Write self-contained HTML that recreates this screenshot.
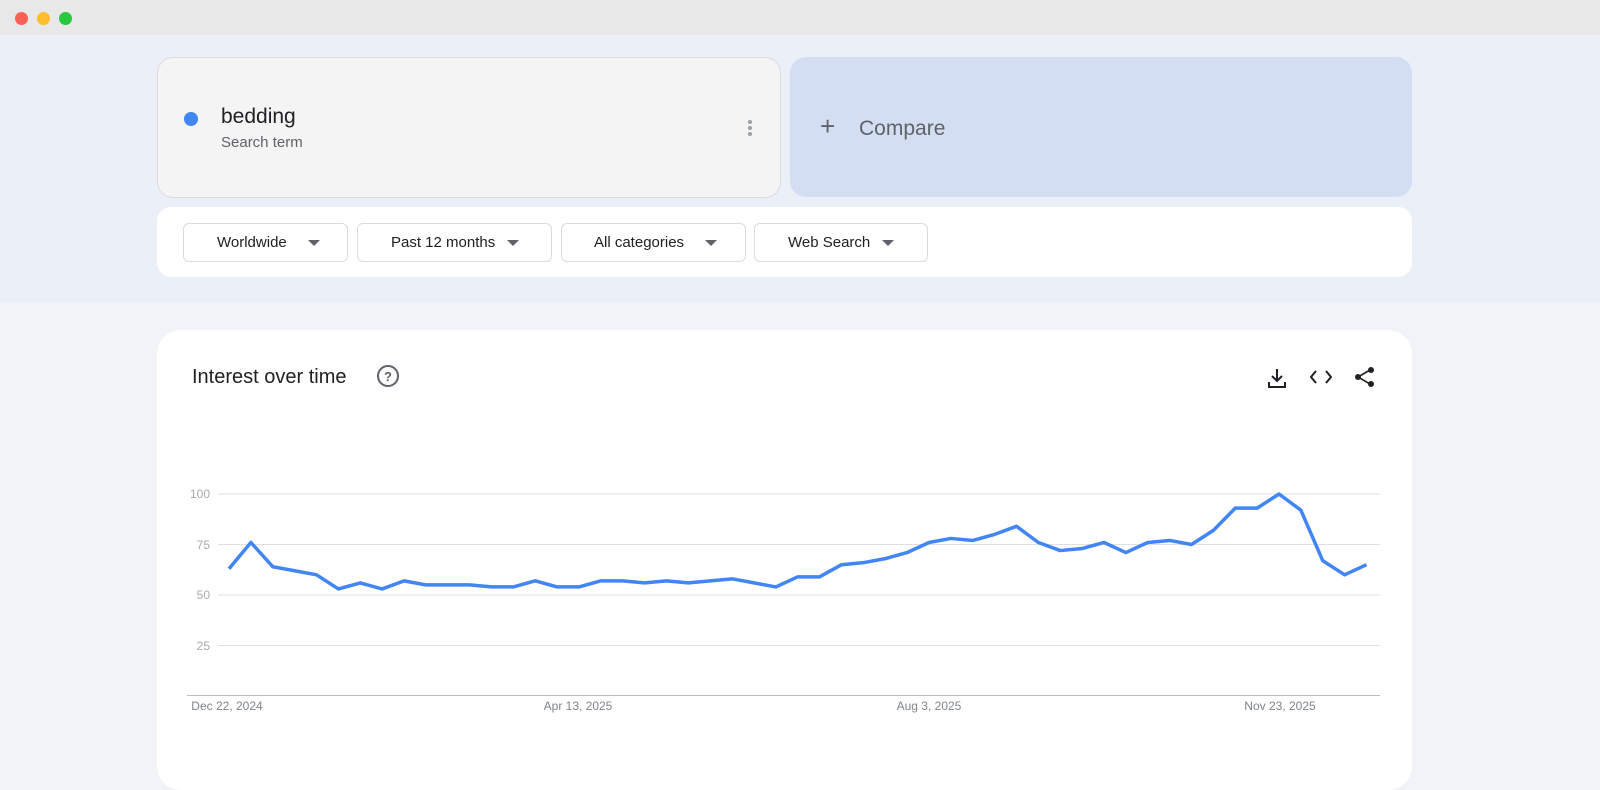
<!DOCTYPE html>
<html><head><style>
*{margin:0;padding:0;box-sizing:border-box}
body{width:1600px;height:772px;overflow:hidden;background:#f1f3f8;font-family:"Liberation Sans",Arial,sans-serif;position:relative}
.bar{position:absolute;left:0;top:0;width:1600px;height:35px;background:#e8e8e8}
.dot{position:absolute;top:12px;width:13px;height:13px;border-radius:50%}
.top{position:absolute;left:0;top:35px;width:1600px;height:268px;background:#ebeff8}
.term{position:absolute;left:157px;top:57px;width:624px;height:141px;background:#f4f4f4;border:1px solid #dcdcdc;border-radius:16px}
.cmp{position:absolute;left:790px;top:57px;width:622px;height:140px;background:#d4def3;border-radius:16px}
.filters{position:absolute;left:157px;top:207px;width:1255px;height:70px;background:#fff;border-radius:14px}
.f{position:absolute;top:16px;height:39px;border:1px solid #dadce0;border-radius:6px;font-size:15px;color:#202124;line-height:37px}
.f span{position:absolute;top:0}
.f i{position:absolute;top:16px;width:0;height:0;border-left:6px solid transparent;border-right:6px solid transparent;border-top:6px solid #5f6368}
.card{position:absolute;left:157px;top:330px;width:1255px;height:460px;background:#fff;border-radius:24px}
</style></head><body>
<div class="bar"></div>
<div class="dot" style="left:15px;background:#fe5f57"></div>
<div class="dot" style="left:37px;background:#febc2e"></div>
<div class="dot" style="left:59px;background:#28c840"></div>
<div class="top"></div>
<div class="term">
 <div style="position:absolute;left:26px;top:54px;width:14px;height:14px;border-radius:50%;background:#4285f4"></div>
 <div style="position:absolute;left:63px;top:47px;font-size:21px;color:#202124">bedding</div>
 <div style="position:absolute;left:63px;top:76px;font-size:15px;color:#5f6368">Search term</div>
 <div style="position:absolute;left:590px;top:62px;width:4px;height:4px;border-radius:50%;background:#9aa0a6;box-shadow:0 6px 0 #9aa0a6,0 12px 0 #9aa0a6"></div>
</div>
<div class="cmp">
 <div style="position:absolute;left:30px;top:56px;font-size:26px;color:#5f6368;line-height:26px">+</div>
 <div style="position:absolute;left:69px;top:60px;font-size:21px;color:#5f6368">Compare</div>
</div>
<div class="filters">
 <div class="f" style="left:26px;width:165px"><span style="left:33px">Worldwide</span><i style="left:124px"></i></div>
 <div class="f" style="left:200px;width:195px"><span style="left:33px">Past 12 months</span><i style="left:149px"></i></div>
 <div class="f" style="left:404px;width:185px"><span style="left:32px">All categories</span><i style="left:143px"></i></div>
 <div class="f" style="left:597px;width:174px"><span style="left:33px">Web Search</span><i style="left:127px"></i></div>
</div>
<div class="card"></div>
<div style="position:absolute;left:192px;top:366px;font-size:20px;color:#202124">Interest over time</div>
<svg style="position:absolute;left:0;top:0" width="1600" height="772">
 <circle cx="388" cy="376" r="10" fill="none" stroke="#5f6368" stroke-width="2"/>
 <text x="388" y="381" font-size="13" font-weight="bold" fill="#5f6368" text-anchor="middle" font-family="Liberation Sans">?</text>
 <g stroke="#202124" stroke-width="2" fill="none">
  <path d="M1277 369v12M1272 376l5 5 5-5M1269 382v5h16v-5"/>
  <path d="M1316 371l-5 6 5 6M1326 371l5 6-5 6"/>
  <path d="M1370 370l-12 7 12 7" stroke-width="1.6"/>
 </g>
 <g fill="#202124"><circle cx="1371" cy="370" r="3"/><circle cx="1358" cy="377" r="3"/><circle cx="1371" cy="384" r="3"/></g>
 <g stroke="#e0e0e0" stroke-width="1">
  <line x1="218" y1="494" x2="1380" y2="494"/>
  <line x1="218" y1="544.5" x2="1380" y2="544.5"/>
  <line x1="218" y1="595" x2="1380" y2="595"/>
  <line x1="218" y1="645.5" x2="1380" y2="645.5"/>
 </g>
 <line x1="187" y1="695.5" x2="1380" y2="695.5" stroke="#bdbdbd"/>
 <g font-family="Liberation Sans" font-size="12" fill="#aaa" text-anchor="end">
  <text x="210" y="498">100</text><text x="210" y="549">75</text><text x="210" y="599">50</text><text x="210" y="650">25</text>
 </g>
 <g font-family="Liberation Sans" font-size="12" fill="#80868b" text-anchor="middle">
  <text x="227" y="710">Dec 22, 2024</text><text x="578" y="710">Apr 13, 2025</text><text x="929" y="710">Aug 3, 2025</text><text x="1280" y="710">Nov 23, 2025</text>
 </g>
 <g transform="translate(229,696) scale(21.875,-2.02)">
 <polyline vector-effect="non-scaling-stroke" fill="none" stroke="#4285f4" stroke-width="3.5" stroke-linejoin="round" points="0,63 1,76 2,64 3,62 4,60 5,53 6,56 7,53 8,57 9,55 10,55 11,55 12,54 13,54 14,57 15,54 16,54 17,57 18,57 19,56 20,57 21,56 22,57 23,58 24,56 25,54 26,59 27,59 28,65 29,66 30,68 31,71 32,76 33,78 34,77 35,80 36,84 37,76 38,72 39,73 40,76 41,71 42,76 43,77 44,75 45,82 46,93 47,93 48,100 49,92 50,67 51,60 52,65"/>
 </g>
</svg>
</body></html>
